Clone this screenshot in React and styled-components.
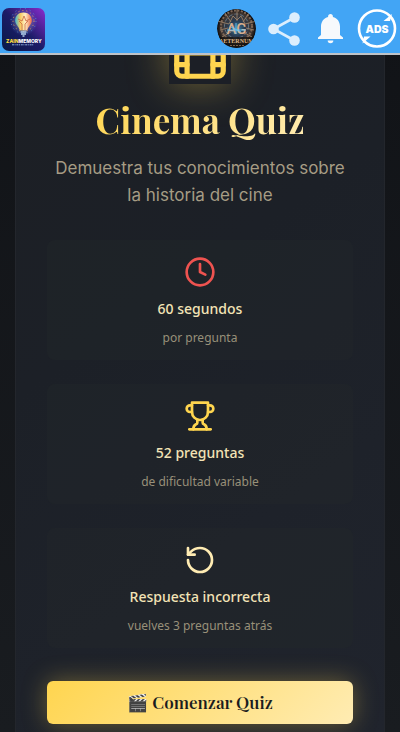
import React from 'react'
import styled, { createGlobalStyle } from 'styled-components'
import { Clock, Film, RotateCcw } from 'lucide-react'

const GOLD = '#ffd54f';
const CREAM = '#ffecb3';
const RED = '#ef5350';

const Trophy = () => (
  <svg width="32" height="32" viewBox="0 0 24 24" fill="none" stroke="currentColor" strokeWidth="2" strokeLinecap="round" strokeLinejoin="round">
    <path d="M6 9H4.5a2.5 2.5 0 0 1 0-5H6" />
    <path d="M18 9h1.5a2.5 2.5 0 0 0 0-5H18" />
    <path d="M4 22h16" />
    <path d="M10 14.66V17c0 .55-.47.98-.97 1.21C7.85 18.75 7 20.24 7 22" />
    <path d="M14 14.66V17c0 .55.47.98.97 1.21C16.15 18.75 17 20.24 17 22" />
    <path d="M18 2H6v7a6 6 0 0 0 12 0V2Z" />
  </svg>
)

const BrandLogo = () => (
  <svg width="43" height="43" viewBox="0 0 43 43">
    <defs>
      <linearGradient id="brandBg" x1="0" y1="1" x2="1" y2="0">
        <stop offset="0" stopColor="#071947" />
        <stop offset="0.5" stopColor="#1c1c67" />
        <stop offset="1" stopColor="#8b2bd0" />
      </linearGradient>
      <linearGradient id="bulb" x1="0" y1="0" x2="1" y2="0">
        <stop offset="0" stopColor="#41b9d5" />
        <stop offset="0.3" stopColor="#f6c85d" />
        <stop offset="0.6" stopColor="#fff0c4" />
        <stop offset="1" stopColor="#ed6848" />
      </linearGradient>
      <radialGradient id="bulbGlow">
        <stop offset="0" stopColor="#ffd98a" stopOpacity="0.8" />
        <stop offset="1" stopColor="#4c7ae0" stopOpacity="0" />
      </radialGradient>
    </defs>
    <rect width="43" height="43" rx="7" fill="url(#brandBg)" />
    <circle cx="21.5" cy="14" r="14" fill="url(#bulbGlow)" />
    <circle cx="21.5" cy="13" r="10.5" fill="none" stroke="#e6a45a" strokeWidth="1" strokeDasharray="1 3" />
    <circle cx="21.5" cy="13" r="12.5" fill="none" stroke="#5aa3e0" strokeWidth="0.7" strokeDasharray="1 4" />
    <path d="M21.5 4.5c-5 0-8.3 3.5-8.3 8 0 4 3.6 5.5 4.6 10h7.4c1-4.5 4.6-6 4.6-10 0-4.5-3.3-8-8.3-8z" fill="url(#bulb)" />
    <path d="M16 11l4 2 2-5 2 5 4-2M20 22v-6l-3-3M23 22v-6l3-3" fill="none" stroke="#c9653f" strokeWidth="0.8" />
    <path d="M18.5 24h6M19 26h5M20.5 28h2" stroke="#b6d2ed" strokeWidth="1.3" />
    <text x="4" y="34.5" fontSize="5" fontWeight="800" fontFamily="Inter, sans-serif" fill="#ffdf3d">ZAIN<tspan fill="#fff">MEMORY</tspan></text>
    <path d="M10 36.8h22" stroke="#8eb0df" strokeWidth="1" strokeDasharray="2 0.6 1 0.8" />
  </svg>
)

const AeternumLogo = () => (
  <svg width="40" height="40" viewBox="0 0 40 40">
    <defs>
      <radialGradient id="agBg">
        <stop offset="0" stopColor="#3b83a8" />
        <stop offset="0.4" stopColor="#293c53" />
        <stop offset="0.8" stopColor="#40352f" />
        <stop offset="1" stopColor="#0a090b" />
      </radialGradient>
      <clipPath id="agClip"><circle cx="20.5" cy="20.5" r="19.5" /></clipPath>
    </defs>
    <g clipPath="url(#agClip)">
      <circle cx="20.5" cy="20.5" r="19.5" fill="url(#agBg)" />
      <circle cx="20.5" cy="18" r="15.5" fill="none" stroke="#7e6655" strokeWidth="2" strokeDasharray="2 1.5" />
      <circle cx="20.5" cy="18" r="12" fill="none" stroke="#667786" strokeWidth="1" strokeDasharray="4 2" />
      <path d="M1 13l12 3 4-8 4 4 4-4 4 8 12-3M4 22l8-2M38 22l-8-2M21 1v12M9 5l6 9M33 5l-6 9M6 29l9-5M36 29l-9-5" fill="none" stroke="#9b8169" strokeWidth="0.9" />
      <text x="20.5" y="25.5" textAnchor="middle" fontSize="15" fontWeight="500" fontFamily="Roboto, sans-serif" fill="#d9b090">AG</text>
      <path d="M11 22h19M20 15v11M15 19l10 5" stroke="#65c9ff" strokeWidth="1" opacity="0.85" />
      <rect y="29" width="42" height="11" fill="#15110f" opacity="0.75" />
      <text x="20.5" y="35" textAnchor="middle" fontSize="6" fontWeight="700" fontFamily="Liberation Serif, serif" fill="#dcb385">AETERNUM</text>
      <path d="M14 37.5h14" stroke="#77604c" strokeDasharray="2 1" />
    </g>
  </svg>
)

const ShareIcon = () => (
  <svg width="40" height="40" viewBox="0 0 40 40" fill="#dceefd">
    <path d="M31.5 9.5L10.5 21l21 11.5" fill="none" stroke="#dceefd" strokeWidth="2.6" />
    <circle cx="10.5" cy="21" r="5.3" />
    <circle cx="31.5" cy="9.5" r="5.3" />
    <circle cx="31.5" cy="32.5" r="5.3" />
  </svg>
)

const BellIcon = () => (
  <svg width="40" height="40" viewBox="0 0 40 40" fill="#f6f9fc">
    <path d="M20.5 6c-1.5 0-2.4 1-2.4 2.3v.7c-4.3 1.1-7.1 4.7-7.1 9.5v8.5L8 29.5V31h25v-1.5L30 27v-8.5c0-4.8-2.8-8.4-7.1-9.5v-.7C22.9 7 22 6 20.5 6z" />
    <path d="M17.7 32.5h5.6a2.8 2.8 0 0 1-5.6 0z" />
  </svg>
)

const AdsIcon = () => (
  <svg width="40" height="40" viewBox="0 0 40 40">
    <circle cx="20" cy="20.5" r="18" fill="none" stroke="#fff" strokeWidth="2.6" />
    <path d="M26.5 13l8.5-7-2 7zM13.5 28.5l-8 7 1.5-7z" fill="#fff" />
    <text x="20" y="24.5" textAnchor="middle" fontSize="10.5" fontWeight="900" fontFamily="Inter, sans-serif" fill="#fff">ADS</text>
  </svg>
)

const features = [
  { icon: <Clock size={32} />, color: RED, title: '60 segundos', text: 'por pregunta' },
  { icon: <Trophy />, color: GOLD, title: '52 preguntas', text: 'de dificultad variable' },
  { icon: <RotateCcw size={32} />, color: CREAM, title: 'Respuesta incorrecta', text: 'vuelves 3 preguntas atrás' },
];

const App = () => {
  return (
    <>
      <GlobalStyle />
      <TopBar>
        <BarLink href="#inicio" aria-label="ZainMemory"><BrandLogo /></BarLink>
        <BarActions>
          <BarLink href="#aeternum" aria-label="Aeternum"><AeternumLogo /></BarLink>
          <BarButton aria-label="Compartir"><ShareIcon /></BarButton>
          <BarButton aria-label="Notificaciones"><BellIcon /></BarButton>
          <BarButton aria-label="Quitar anuncios"><AdsIcon /></BarButton>
        </BarActions>
      </TopBar>
      <Page>
        <Card>
          <FilmBox><Film size={62} /></FilmBox>
          <Title>Cinema Quiz</Title>
          <Subtitle>Demuestra tus conocimientos sobre la historia del cine</Subtitle>
          <FeatureList>
            {features.map((f) => (
              <Feature key={f.title}>
                <FeatureIcon $color={f.color}>{f.icon}</FeatureIcon>
                <FeatureTitle>{f.title}</FeatureTitle>
                <FeatureText>{f.text}</FeatureText>
              </Feature>
            ))}
          </FeatureList>
          <StartButton>🎬 Comenzar Quiz</StartButton>
        </Card>
      </Page>
    </>
  )
}

export default App

const GlobalStyle = createGlobalStyle`
  * {
    box-sizing: border-box;
  }
  body {
    margin: 0;
    background: #14161a;
    font-family: "Noto Sans", sans-serif;
  }
`;

const TopBar = styled.header`
  position: fixed;
  top: 0;
  left: 0;
  right: 0;
  z-index: 10;
  display: flex;
  justify-content: space-between;
  align-items: flex-start;
  padding: 8px 3px 2px 2px;
  background: #42a5f5;
  border-bottom: 2px solid #bfc3c8;
`;

const BarActions = styled.nav`
  display: flex;
  gap: 7px;
`;

const BarLink = styled.a`
  display: flex;
`;

const BarButton = styled.button`
  display: flex;
  padding: 0;
  border: 0;
  background: none;
  cursor: pointer;
`;

const Page = styled.main`
  display: flex;
  justify-content: center;
  min-height: 100vh;
  padding: 0 15px;
  background: linear-gradient(180deg, #111317, #191c20);
`;

const Card = styled.section`
  display: flex;
  flex-direction: column;
  align-items: center;
  width: 100%;
  max-width: 800px;
  padding: 22px 31px 8px;
  border: 1px solid #23262c;
  border-width: 0 1px;
  background: linear-gradient(145deg, #1c1f24, #1c2027 40%, #20242d);
`;

const FilmBox = styled.div`
  display: flex;
  color: ${GOLD};
  background: #1c1f26;
  box-shadow: 0 0 40px rgba(255, 213, 79, 0.4);
`;

const Title = styled.h1`
  margin: 15px 0;
  font-family: "Playfair Display", "Liberation Serif", serif;
  font-size: 35px;
  line-height: 41px;
  font-weight: 700;
  color: transparent;
  background: linear-gradient(135deg, ${GOLD}, ${CREAM});
  background-clip: text;
`;

const Subtitle = styled.p`
  margin: 0 0 31px;
  font-family: Inter, sans-serif;
  font-size: 17px;
  line-height: 27px;
  text-align: center;
  color: #a69c84;
`;

const FeatureList = styled.ul`
  display: flex;
  flex-direction: column;
  gap: 24px;
  width: 100%;
  margin: 0 0 33px;
  padding: 0;
  list-style: none;
`;

const Feature = styled.li`
  display: flex;
  flex-direction: column;
  align-items: center;
  padding: 16px 16px 13px;
  border-radius: 8px;
  background: rgba(36, 39, 43, 0.4);
`;

const FeatureIcon = styled.span`
  display: flex;
  color: ${props => props.$color};
`;

const FeatureTitle = styled.h2`
  margin: 9px 0 8px;
  font-size: 14px;
  line-height: 24px;
  font-weight: 500;
  color: #f3e3b6;
`;

const FeatureText = styled.p`
  margin: 0;
  font-size: 12px;
  line-height: 18px;
  color: #989079;
`;

const StartButton = styled.button`
  width: 100%;
  padding: 8px 16px;
  border: 0;
  border-radius: 6px;
  font-family: "Playfair Display", "Liberation Serif", serif;
  font-size: 17px;
  line-height: 27px;
  font-weight: 600;
  color: #1a1c20;
  background: linear-gradient(135deg, ${GOLD}, ${CREAM});
  box-shadow: 0 0 24px rgba(255, 213, 79, 0.35);
  cursor: pointer;
`;
